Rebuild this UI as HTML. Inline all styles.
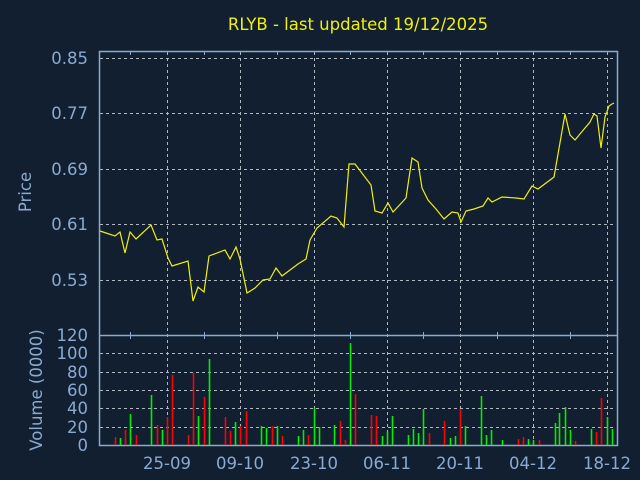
<!DOCTYPE html>
<html><head><style>body{margin:0;background:#111f30;}svg{display:block}</style></head><body>
<svg width="640" height="480" xmlns="http://www.w3.org/2000/svg" font-family="DejaVu Sans, Liberation Sans, sans-serif">
<rect width="640" height="480" fill="#111f30"/>
<text x="358" y="30" fill="#f0f000" font-size="16.5" text-anchor="middle">RLYB - last updated 19/12/2025</text>
<g stroke="#b0b8c0" stroke-dasharray="3,3" stroke-width="1">
<line x1="100" y1="58.5" x2="616" y2="58.5"/><line x1="100" y1="113.5" x2="616" y2="113.5"/><line x1="100" y1="169.5" x2="616" y2="169.5"/><line x1="100" y1="224.5" x2="616" y2="224.5"/><line x1="100" y1="280.5" x2="616" y2="280.5"/>
<line x1="100" y1="353.5" x2="616" y2="353.5"/><line x1="100" y1="372.5" x2="616" y2="372.5"/><line x1="100" y1="390.5" x2="616" y2="390.5"/><line x1="100" y1="408.5" x2="616" y2="408.5"/><line x1="100" y1="427.5" x2="616" y2="427.5"/>
<line x1="167.5" y1="52" x2="167.5" y2="445"/><line x1="240.5" y1="52" x2="240.5" y2="445"/><line x1="314.5" y1="52" x2="314.5" y2="445"/><line x1="387.5" y1="52" x2="387.5" y2="445"/><line x1="460.5" y1="52" x2="460.5" y2="445"/><line x1="533.5" y1="52" x2="533.5" y2="445"/><line x1="607.5" y1="52" x2="607.5" y2="445"/>
</g>
<g stroke="#8aaad2" stroke-width="1.5" fill="none">
<rect x="99.5" y="51.5" width="518" height="394"/>
<line x1="99.5" y1="335.5" x2="617.5" y2="335.5"/>
</g>
<g stroke="#8aaad2" stroke-width="1">
<line x1="130.5" y1="332" x2="130.5" y2="339"/><line x1="204.5" y1="332" x2="204.5" y2="339"/><line x1="277.5" y1="332" x2="277.5" y2="339"/><line x1="350.5" y1="332" x2="350.5" y2="339"/><line x1="423.5" y1="332" x2="423.5" y2="339"/><line x1="497.5" y1="332" x2="497.5" y2="339"/><line x1="570.5" y1="332" x2="570.5" y2="339"/>
<line x1="130.5" y1="52" x2="130.5" y2="55"/><line x1="204.5" y1="52" x2="204.5" y2="55"/><line x1="277.5" y1="52" x2="277.5" y2="55"/><line x1="350.5" y1="52" x2="350.5" y2="55"/><line x1="423.5" y1="52" x2="423.5" y2="55"/><line x1="497.5" y1="52" x2="497.5" y2="55"/><line x1="570.5" y1="52" x2="570.5" y2="55"/>
</g>
<polyline fill="none" stroke="#f0f000" stroke-width="1.2" points="100,231 115,236 120,232 125,253 130,232 136,239 151,225 157,240 162,239 168,258 172,266 188,261 193,301 198,287 204,292 209,256 225,250 230,259 236,247 240,259 247,293 255,288 263,280 270,279 276,268 282,276 290,270 298,264 306,259 310,240 317,228 331,216 337,218 344,227 349,164 355,164 371,185 375,211 382,213 388,203 393,212 406,198 412,158 418,162 422,188 428,200 436,209 444,219 452,212 458,213 461,222 466,211 474,209 483,206 488,198 492,202 502,197 516,198 524,199 532,186 538,189 546,183 554,177 565,114 570,135 575,140 590,122 594,114 597,116 601,148 605,117 609,106 612,104 614,103"/>
<g stroke-width="1.6">
<g stroke="#ff0000"><line x1="115.5" y1="437" x2="115.5" y2="445"/><line x1="125.5" y1="430" x2="125.5" y2="445"/><line x1="136.5" y1="435" x2="136.5" y2="445"/><line x1="157.5" y1="425" x2="157.5" y2="445"/><line x1="167.5" y1="417" x2="167.5" y2="445"/><line x1="172.5" y1="375" x2="172.5" y2="445"/><line x1="188.5" y1="435" x2="188.5" y2="445"/><line x1="193.5" y1="373" x2="193.5" y2="445"/><line x1="204.5" y1="397" x2="204.5" y2="445"/><line x1="225.5" y1="417" x2="225.5" y2="445"/><line x1="230.5" y1="431" x2="230.5" y2="445"/><line x1="240.5" y1="426" x2="240.5" y2="445"/><line x1="246.5" y1="411" x2="246.5" y2="445"/><line x1="272.5" y1="426" x2="272.5" y2="445"/><line x1="282.5" y1="436" x2="282.5" y2="445"/><line x1="308.5" y1="435" x2="308.5" y2="445"/><line x1="340.5" y1="421" x2="340.5" y2="445"/><line x1="345.5" y1="440" x2="345.5" y2="445"/><line x1="355.5" y1="394" x2="355.5" y2="445"/><line x1="371.5" y1="415" x2="371.5" y2="445"/><line x1="376.5" y1="416" x2="376.5" y2="445"/><line x1="429.5" y1="433" x2="429.5" y2="445"/><line x1="444.5" y1="421" x2="444.5" y2="445"/><line x1="460.5" y1="409" x2="460.5" y2="445"/><line x1="518.5" y1="439" x2="518.5" y2="445"/><line x1="523.5" y1="437" x2="523.5" y2="445"/><line x1="539.5" y1="440" x2="539.5" y2="445"/><line x1="575.5" y1="441" x2="575.5" y2="445"/><line x1="596.5" y1="432" x2="596.5" y2="445"/><line x1="601.5" y1="398" x2="601.5" y2="445"/></g>
<g stroke="#00ee00"><line x1="120.5" y1="438" x2="120.5" y2="445"/><line x1="130.5" y1="414" x2="130.5" y2="445"/><line x1="151.5" y1="395" x2="151.5" y2="445"/><line x1="162.5" y1="430" x2="162.5" y2="445"/><line x1="198.5" y1="416" x2="198.5" y2="445"/><line x1="209.5" y1="359" x2="209.5" y2="445"/><line x1="235.5" y1="422" x2="235.5" y2="445"/><line x1="261.5" y1="426" x2="261.5" y2="445"/><line x1="266.5" y1="428" x2="266.5" y2="445"/><line x1="277.5" y1="426" x2="277.5" y2="445"/><line x1="298.5" y1="436" x2="298.5" y2="445"/><line x1="303.5" y1="430" x2="303.5" y2="445"/><line x1="314.5" y1="408" x2="314.5" y2="445"/><line x1="319.5" y1="427" x2="319.5" y2="445"/><line x1="334.5" y1="425" x2="334.5" y2="445"/><line x1="350.5" y1="343" x2="350.5" y2="445"/><line x1="382.5" y1="436" x2="382.5" y2="445"/><line x1="387.5" y1="432" x2="387.5" y2="445"/><line x1="392.5" y1="416" x2="392.5" y2="445"/><line x1="408.5" y1="435" x2="408.5" y2="445"/><line x1="413.5" y1="429" x2="413.5" y2="445"/><line x1="418.5" y1="433" x2="418.5" y2="445"/><line x1="423.5" y1="409" x2="423.5" y2="445"/><line x1="450.5" y1="438" x2="450.5" y2="445"/><line x1="455.5" y1="436" x2="455.5" y2="445"/><line x1="465.5" y1="426" x2="465.5" y2="445"/><line x1="481.5" y1="396" x2="481.5" y2="445"/><line x1="486.5" y1="435" x2="486.5" y2="445"/><line x1="491.5" y1="430" x2="491.5" y2="445"/><line x1="502.5" y1="440" x2="502.5" y2="445"/><line x1="528.5" y1="439" x2="528.5" y2="445"/><line x1="533.5" y1="440" x2="533.5" y2="445"/><line x1="555.5" y1="423" x2="555.5" y2="445"/><line x1="559.5" y1="413" x2="559.5" y2="445"/><line x1="565.5" y1="407" x2="565.5" y2="445"/><line x1="570.5" y1="430" x2="570.5" y2="445"/><line x1="591.5" y1="429" x2="591.5" y2="445"/><line x1="607.5" y1="417" x2="607.5" y2="445"/><line x1="612.5" y1="429" x2="612.5" y2="445"/></g>
</g>
<g fill="#8aaad2" font-size="16.5" text-anchor="end">
<text x="88" y="64">0.85</text><text x="88" y="119">0.77</text><text x="88" y="175">0.69</text><text x="88" y="230">0.61</text><text x="88" y="286">0.53</text>
<text x="88" y="341">120</text><text x="88" y="359">100</text><text x="88" y="378">80</text><text x="88" y="396">60</text><text x="88" y="414">40</text><text x="88" y="433">20</text><text x="88" y="451">0</text>
</g>
<g fill="#8aaad2" font-size="16.5" text-anchor="middle">
<text x="167" y="469">25-09</text><text x="240" y="469">09-10</text><text x="314" y="469">23-10</text><text x="387" y="469">06-11</text><text x="460" y="469">20-11</text><text x="533" y="469">04-12</text><text x="607" y="469">18-12</text>
<text transform="translate(31,192) rotate(-90)">Price</text>
<text transform="translate(42,390) rotate(-90)">Volume (0000)</text>
</g>
</svg>
</body></html>
